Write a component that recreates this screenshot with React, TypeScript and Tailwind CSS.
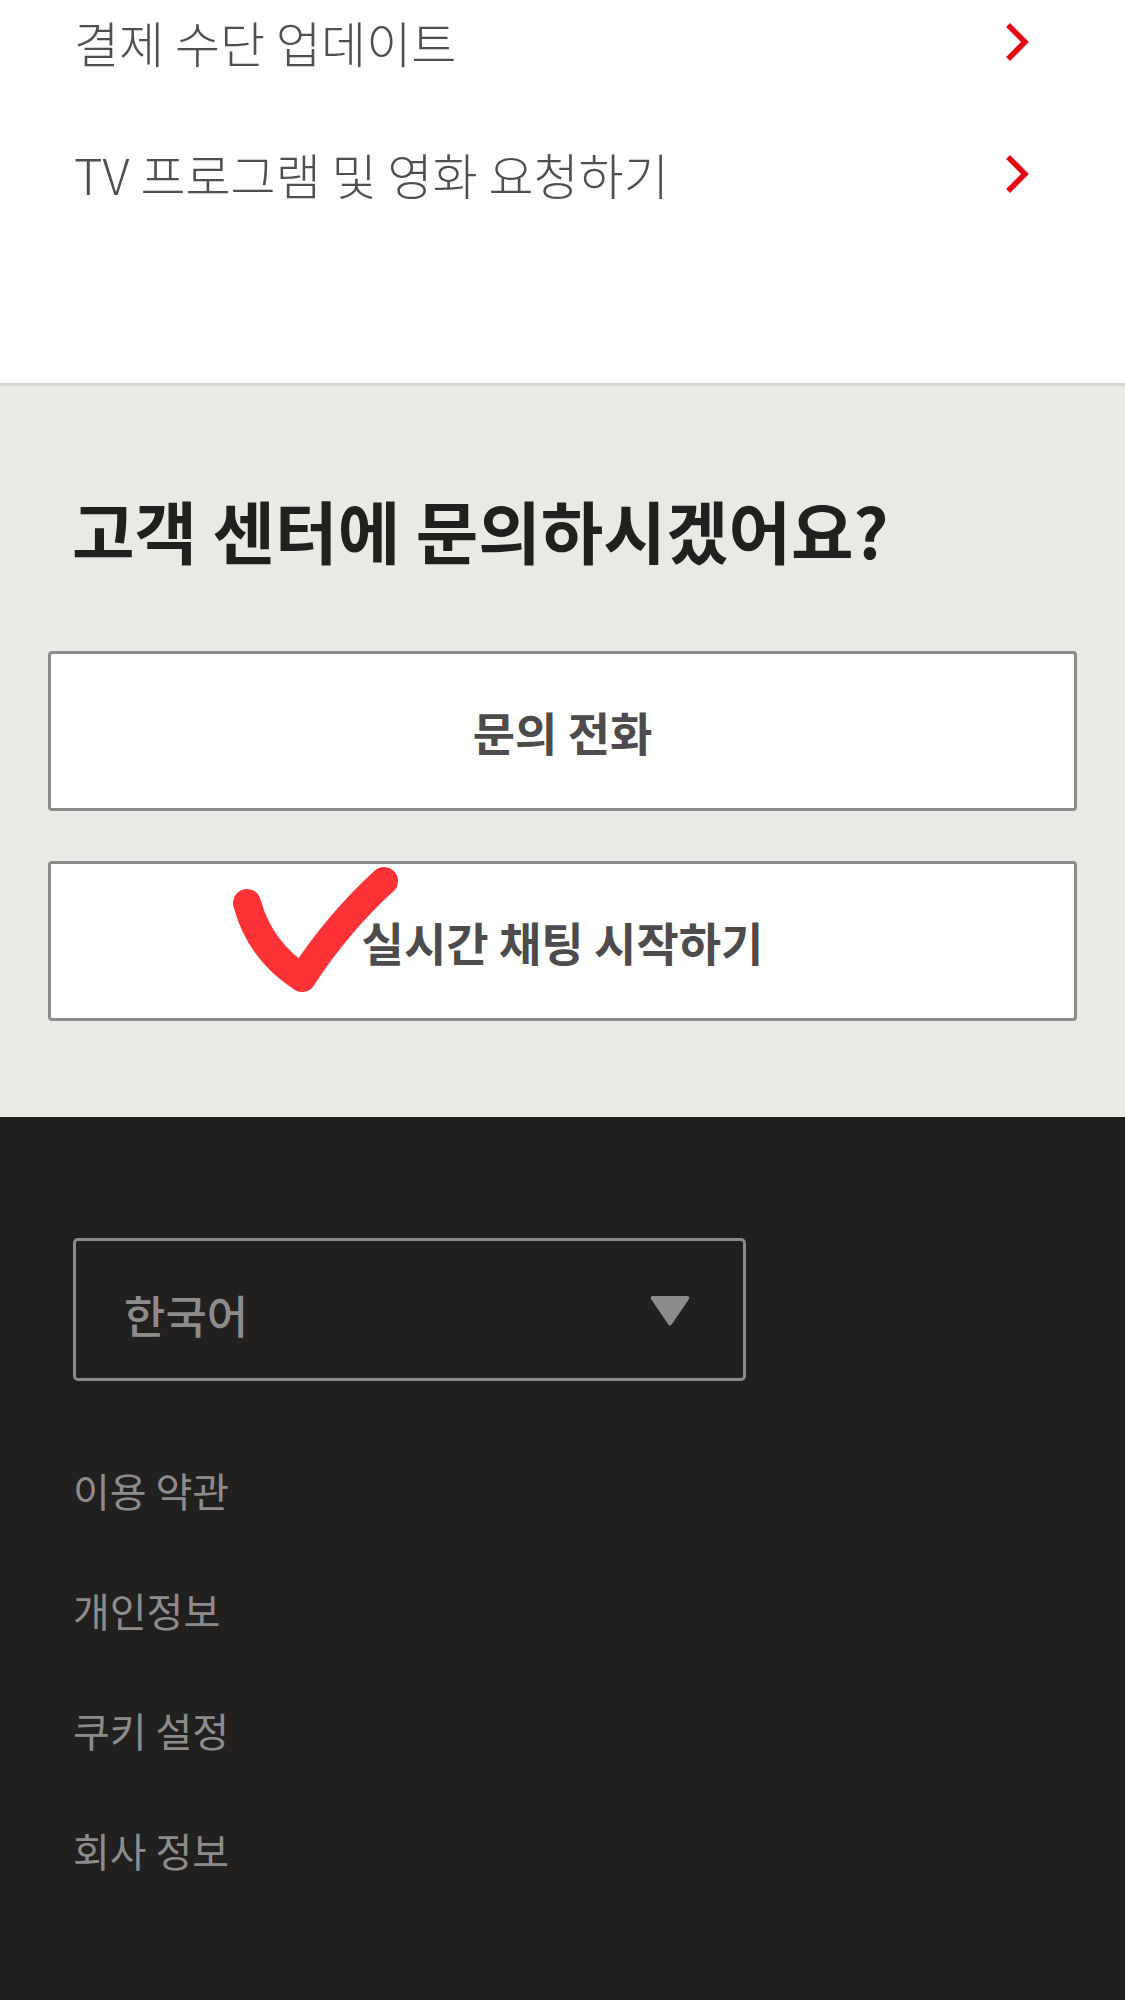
const items = ['결제 수단 업데이트', 'TV 프로그램 및 영화 요청하기'];
const links = ['이용 약관', '개인정보', '쿠키 설정', '회사 정보'];

const Chevron = () => (
  <svg width="24" height="38" viewBox="0 0 24 38" fill="none">
    <polyline points="4,4 19,19 4,34" stroke="#e50914" strokeWidth="5.5" strokeLinecap="square" />
  </svg>
);

const App = () => {
  return (
    <div className="w-full font-['Noto_Sans_CJK_KR','Noto_Sans',sans-serif]">
      <section className="bg-white border-b-[3px] border-[#d5d5d3]">
        <ul className="flex flex-col gap-[88px] pt-[20px] pb-[187px] pl-[74px] pr-[95px]">
          {items.map((item) => (
            <li key={item} className="flex justify-between items-center h-[44px]">
              <span className="text-[49px] leading-[44px] font-light text-[#4f4f4f]">{item}</span>
              <Chevron />
            </li>
          ))}
        </ul>
      </section>

      <section className="bg-[#e9e9e6] pt-[112px] pb-[96px]">
        <h2 className="px-[72px] text-[68px] leading-[64px] font-bold text-[#221f1f]">
          고객 센터에 문의하시겠어요?
        </h2>
        <div className="flex flex-col gap-[50px] mt-[89px] px-[48px]">
          <button className="h-[160px] w-full bg-white border-[3px] border-[#8c8c8c] rounded-[4px] text-[46px] font-bold text-[#4d4b4b]">
            문의 전화
          </button>
          <div className="relative">
            <button className="h-[160px] w-full bg-white border-[3px] border-[#8c8c8c] rounded-[4px] text-[46px] font-bold text-[#4d4b4b]">
              실시간 채팅 시작하기
            </button>
            <svg className="absolute left-0 top-0 pointer-events-none" width="420" height="160" viewBox="0 0 420 160" fill="none">
              <path
                d="M199 42 Q 212 90 254 117 Q 290 62 336 20"
                stroke="#fc3336"
                strokeWidth="28"
                strokeLinecap="round"
                strokeLinejoin="round"
              />
            </svg>
          </div>
        </div>
      </section>

      <footer className="bg-[#221f1f] pt-[121px] pb-[140px] px-[73px]">
        <div className="flex items-center justify-between w-[673px] h-[143px] border-[3px] border-[#8a8a8a] rounded-[5px] pl-[48px] pr-[52px]">
          <span className="text-[45px] leading-[44px] font-medium text-[#8c8c8c] pt-[10px]">한국어</span>
          <svg width="42" height="34" viewBox="0 0 42 34">
            <path d="M4 3 L38 3 Q41 3 40 6 L23 31 Q21 34 19 31 L2 6 Q1 3 4 3 Z" fill="#8c8c8c" />
          </svg>
        </div>
        <ul className="flex flex-col gap-[80px] mt-[89px]">
          {links.map((link) => (
            <li key={link} className="text-[40px] leading-[40px] text-[#8c8c8c]">
              {link}
            </li>
          ))}
        </ul>
      </footer>
    </div>
  );
};

export default App;
